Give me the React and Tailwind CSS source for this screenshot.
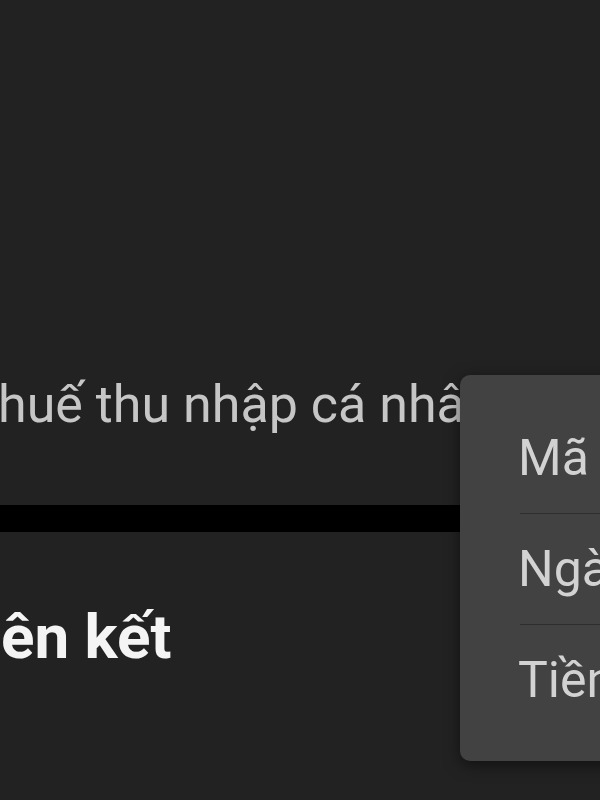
import React from "react";

export default function App() {
  return (
    <div
      className="relative h-[800px] w-[600px] overflow-hidden bg-[#222222]"
      style={{ fontFamily: "Roboto, 'Noto Sans', sans-serif" }}
    >
      <div className="flex flex-col pt-[379px]">
        <div className="-ml-[33px] whitespace-nowrap text-[52px] leading-[52px] text-[#c6c6c6]">
          Thuế thu nhập cá nhân
        </div>
        <div className="mt-[74px] h-[27px] w-full bg-black" />
        <div className="-ml-[49px] mt-[74px] whitespace-nowrap text-[62px] font-bold leading-[62px] text-[#f4f4f4]">
          Liên kết
        </div>
      </div>

      <div className="absolute left-[460px] top-[375px] w-[320px] rounded-[10px] bg-[#424242] pt-[28px] pb-[26px] shadow-[0_4px_16px_rgba(0,0,0,0.5)]">
        <div className="whitespace-nowrap pl-[58px] text-[50px] leading-[110px] text-[#d2d2d2]">
          Mã số thuế
        </div>
        <div className="ml-[60px] h-px bg-[#2e2e2e]" />
        <div className="whitespace-nowrap pl-[58px] text-[50px] leading-[110px] text-[#d2d2d2]">
          Ngày
        </div>
        <div className="ml-[60px] h-px bg-[#2e2e2e]" />
        <div className="whitespace-nowrap pl-[58px] text-[50px] leading-[110px] text-[#d2d2d2]">
          Tiền
        </div>
      </div>
    </div>
  );
}
